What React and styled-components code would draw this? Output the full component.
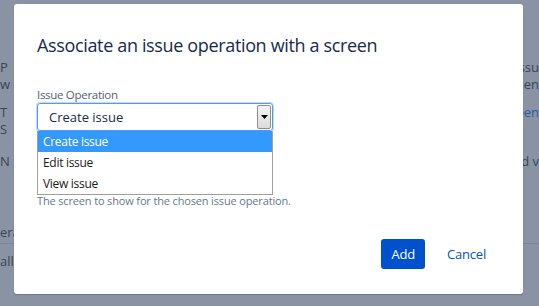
import React from "react";
import styled, { createGlobalStyle } from "styled-components";

const Global = createGlobalStyle`
  html, body { margin: 0; padding: 0; }
  body {
    width: 539px; height: 306px; overflow: hidden;
    background: #8a93a4;
    font-family: "Open Sans", "Noto Sans", sans-serif;
  }
`;

const Page = styled.div`
  position: relative;
  width: 539px;
  height: 306px;
  overflow: hidden;
`;

/* ---------- page behind the dialog ---------- */
const Backdrop = styled.div`
  display: flex;
  justify-content: space-between;
  padding-top: 59px;
  height: 100%;
  box-sizing: border-box;
`;

const BgColumn = styled.div`
  display: flex;
  flex-direction: column;
  width: ${(p) => p.$w}px;
  align-items: ${(p) => (p.$right ? "flex-end" : "flex-start")};
`;

const BgPara = styled.div`
  display: flex;
  flex-direction: column;
  margin-top: ${(p) => p.$gap || 0}px;
  width: 100%;
  align-items: inherit;
`;

const BgLine = styled.span`
  font-size: 13px;
  line-height: 17px;
  color: ${(p) => (p.$link ? "#2d58a6" : "#3a4457")};
  white-space: nowrap;
`;

const BgRule = styled.div`
  margin-top: ${(p) => p.$gap}px;
  width: 100%;
  height: 1px;
  background: #7b8596;
`;

/* ---------- dialog ---------- */
const Dialog = styled.div`
  position: absolute;
  left: 14px;
  top: 4px;
  width: 509px;
  height: 290px;
  box-sizing: border-box;
  background: #fff;
  border-radius: 3px;
  box-shadow: 0 1px 1px rgba(9, 30, 66, 0.25);
  padding: 28px 25px 25px 23px;
  display: flex;
  flex-direction: column;
`;

const Title = styled.h2`
  margin: 0;
  font-size: 18px;
  line-height: 26px;
  font-weight: 400;
  color: #172b4d;
  letter-spacing: -0.35px;
`;

const Form = styled.div`
  margin-top: 30px;
  display: flex;
  flex-direction: column;
  flex: 1;
`;

const Field = styled.div`
  position: relative;
  display: flex;
  flex-direction: column;
  width: 236px;
`;

const Label = styled.label`
  font-size: 11.5px;
  line-height: 14px;
  color: #505f79;
  letter-spacing: -0.3px;
`;

const SelectBox = styled.div`
  margin-top: 1px;
  height: 28px;
  box-sizing: border-box;
  border: 1px solid #4c9aff;
  border-radius: 3px;
  box-shadow: 0 0 0 1px rgba(76, 154, 255, 0.35);
  display: flex;
  align-items: center;
  padding-left: 11px;
  font-size: 13px;
  color: #172b4d;
  position: relative;
`;

const Arrow = styled.div`
  position: absolute;
  right: 1px;
  top: 1px;
  bottom: 1px;
  width: 14px;
  box-sizing: border-box;
  border: 1px solid #8f8f8f;
  border-radius: 2px;
  background: linear-gradient(#f4f4f4, #dcdcdc);
  display: flex;
  align-items: center;
  justify-content: center;
`;

const Options = styled.ul`
  position: absolute;
  left: 0;
  top: 43px;
  width: 236px;
  box-sizing: border-box;
  margin: 0;
  padding: 0;
  list-style: none;
  background: #fff;
  border: 1px solid #a0a0a0;
  border-top: none;
  z-index: 2;
`;

const Option = styled.li`
  height: 21px;
  line-height: 21px;
  padding-left: 5px;
  font-size: 12px;
  letter-spacing: -0.3px;
  color: ${(p) => (p.$active ? "#fff" : "#1a1a1a")};
  background: ${(p) => (p.$active ? "#3399ff" : "transparent")};
`;

const Spacer = styled.div`
  height: 63px;
`;

const Help = styled.div`
  font-size: 11px;
  line-height: 14px;
  color: #6b778c;
  letter-spacing: -0.15px;
`;

const Footer = styled.div`
  display: flex;
  justify-content: flex-end;
  align-items: center;
  gap: 10px;
`;

const Button = styled.button`
  height: 30px;
  border: none;
  border-radius: 3px;
  padding: 0 ${(p) => (p.$primary ? 10 : 12)}px;
  font-family: inherit;
  font-size: 13px;
  letter-spacing: -0.2px;
  cursor: pointer;
  background: ${(p) => (p.$primary ? "#0052cc" : "transparent")};
  color: ${(p) => (p.$primary ? "#fff" : "#0052cc")};
`;

export default function App() {
  return (
    <Page>
      <Global />
      <Backdrop>
        <BgColumn $w={14}>
          <BgPara>
            <BgLine>P</BgLine>
            <BgLine>w</BgLine>
          </BgPara>
          <BgPara $gap={11}>
            <BgLine>T</BgLine>
            <BgLine>S</BgLine>
          </BgPara>
          <BgPara $gap={15}>
            <BgLine>N</BgLine>
          </BgPara>
          <BgPara $gap={54}>
            <BgLine>era</BgLine>
          </BgPara>
          <BgRule $gap={2} />
          <BgPara $gap={9}>
            <BgLine>all</BgLine>
          </BgPara>
        </BgColumn>
        <BgColumn $w={17} $right>
          <BgPara>
            <BgLine>issu</BgLine>
            <BgLine>hen</BgLine>
          </BgPara>
          <BgPara $gap={11}>
            <BgLine $link>een</BgLine>
          </BgPara>
          <BgPara $gap={32}>
            <BgLine>ed v</BgLine>
          </BgPara>
          <BgRule $gap={73} />
        </BgColumn>
      </Backdrop>
      <Dialog role="dialog">
        <Title>Associate an issue operation with a screen</Title>
        <Form>
          <Field>
            <Label>Issue Operation</Label>
            <SelectBox>
              Create issue
              <Arrow>
                <svg width="7" height="4" viewBox="0 0 7 4">
                  <path d="M0 0h7L3.5 4z" fill="#000" />
                </svg>
              </Arrow>
            </SelectBox>
            <Options>
              <Option $active>Create issue</Option>
              <Option>Edit issue</Option>
              <Option>View issue</Option>
            </Options>
          </Field>
          <Spacer />
          <Help>The screen to show for the chosen issue operation.</Help>
        </Form>
        <Footer>
          <Button $primary>Add</Button>
          <Button>Cancel</Button>
        </Footer>
      </Dialog>
    </Page>
  );
}
